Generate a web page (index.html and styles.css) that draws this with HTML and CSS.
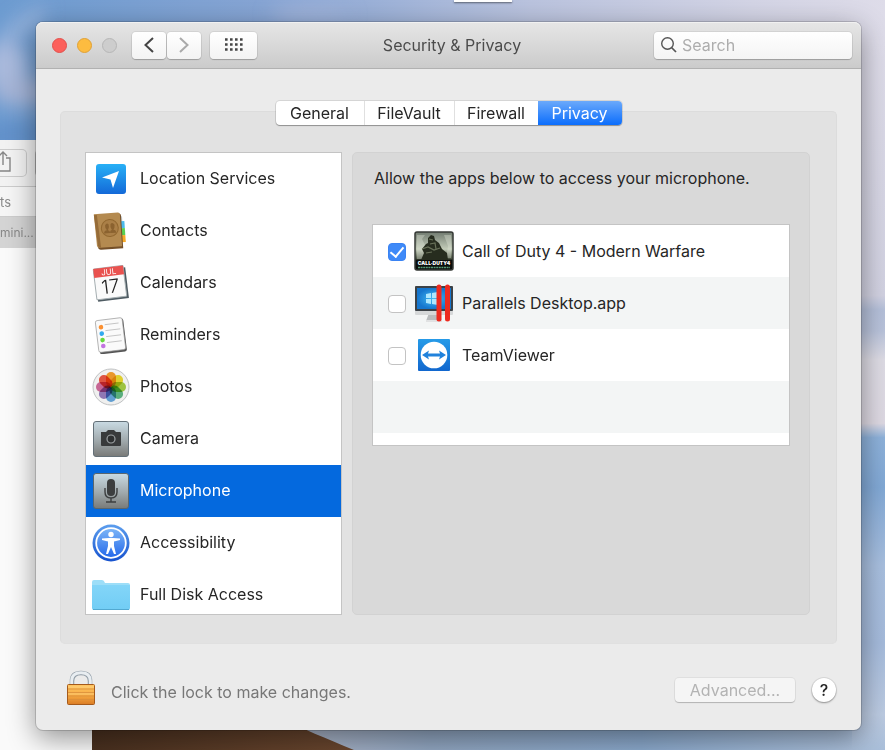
FILE: index.html
```
<!DOCTYPE html>
<html lang="en">
<head>
<meta charset="utf-8">
<title>Security &amp; Privacy</title>
<link rel="stylesheet" href="styles.css">
</head>
<body>
<svg class="wallpaper" viewBox="0 0 885 750" preserveAspectRatio="none" aria-hidden="true">
  <defs>
    <linearGradient id="sky" x1="0" x2="1"><stop offset="0" stop-color="#6c9bd0"/><stop offset=".3" stop-color="#87a5d4"/><stop offset=".6" stop-color="#bac3de"/><stop offset=".85" stop-color="#d3d4e5"/><stop offset="1" stop-color="#dedce9"/></linearGradient>
    <linearGradient id="east" x1="0" x2="0" y1="0" y2="1"><stop offset="0" stop-color="#dfddea"/><stop offset=".36" stop-color="#d2d2e2"/><stop offset=".38" stop-color="#b5c0da"/><stop offset=".41" stop-color="#b9c3db"/><stop offset=".45" stop-color="#dedce5"/><stop offset=".54" stop-color="#ded9e3"/><stop offset=".56" stop-color="#8eb2db"/><stop offset=".63" stop-color="#82a9d6"/><stop offset=".74" stop-color="#a8bfdf"/><stop offset=".85" stop-color="#a5bbdc"/><stop offset=".95" stop-color="#bccbe2"/><stop offset="1" stop-color="#aabfda"/></linearGradient>
    <linearGradient id="south" x1="0" x2="1"><stop offset="0" stop-color="#b4b9c9"/><stop offset=".3" stop-color="#91a6c1"/><stop offset=".65" stop-color="#8ba9cc"/><stop offset="1" stop-color="#aabfda"/></linearGradient>
    <linearGradient id="dune" x1="0" x2="1"><stop offset="0" stop-color="#49301f"/><stop offset="1" stop-color="#6b472f"/></linearGradient>
    <filter id="soft" x="-100%" y="-100%" width="300%" height="300%"><feGaussianBlur stdDeviation="9"/></filter>
  </defs>
  <rect width="885" height="750" fill="url(#sky)"/>
  <g filter="url(#soft)">
    <ellipse cx="22" cy="26" rx="30" ry="8" fill="#94b1da" transform="rotate(-35 22 26)"/>
    <ellipse cx="6" cy="66" rx="22" ry="24" fill="#a9b9dc"/>
    <ellipse cx="22" cy="92" rx="30" ry="14" fill="#a5b4d6"/>
    <ellipse cx="14" cy="136" rx="60" ry="12" fill="#618fc9"/>
    <ellipse cx="310" cy="14" rx="40" ry="6" fill="#a4b5da"/>
  </g>
  <rect x="850" y="40" width="35" height="710" fill="url(#east)"/>
  <rect x="250" y="715" width="602" height="35" fill="url(#south)"/>
  <path d="M91 715H275C305 730 325 738 354 750H91Z" fill="url(#dune)"/>
</svg>

<div class="finder" aria-hidden="true">
  <div class="finder-tools">
    <span class="finder-share"><svg width="20" height="24" viewBox="0 0 20 24"><path d="M5 8H1V21H15V8H11M8 15V2M4 6L8 2L12 6" fill="none" stroke="#858585" stroke-width="1.4"/></svg></span>
    <span class="finder-next"></span>
  </div>
  <div class="finder-path">ts</div>
  <div class="finder-tab">mini...</div>
</div>
<div class="tip" aria-hidden="true"></div>

<main class="window">
  <header class="titlebar">
    <div class="left">
      <div class="lights">
        <button class="light red" aria-label="Close"></button>
        <button class="light amber" aria-label="Minimize"></button>
        <button class="light" aria-label="Zoom" disabled></button>
      </div>
      <div class="history">
        <button class="tool" aria-label="Back"><svg width="12" height="18" viewBox="0 0 12 18"><path d="M10 2L2.500 9L10 16" fill="none" stroke="#444" stroke-width="2"/></svg></button>
        <button class="tool" aria-label="Forward"><svg width="12" height="18" viewBox="0 0 12 18"><path d="M2 2L9.500 9L2 16" fill="none" stroke="#aaa" stroke-width="2"/></svg></button>
      </div>
      <button class="tool grid-button" aria-label="Show All"><svg width="18" height="14" viewBox="0 0 18 14"><path d="M0 1.500H18M0 6.500H18M0 11.500H18" stroke="#444" stroke-width="2.600" stroke-dasharray="2.600 2.400"/></svg></button>
    </div>
    <h1>Security &amp; Privacy</h1>
    <label class="search">
      <svg width="18" height="18" viewBox="0 0 18 18"><circle cx="7.500" cy="7.500" r="5.800" fill="none" stroke="#555" stroke-width="1.400"/><path d="M11.500 11.500L16 16" stroke="#555" stroke-width="1.700"/></svg>
      <input type="text" placeholder="Search" aria-label="Search">
    </label>
  </header>

  <div class="content">
    <nav class="tabs">
      <button>General</button><button>FileVault</button><button>Firewall</button><button class="active">Privacy</button>
    </nav>
    <section class="panel">
      <ul class="services">
        <li><button><svg class="icon" viewBox="0 0 38 38"><defs><linearGradient id="loc" x1="0" x2="0" y1="0" y2="1"><stop offset="0" stop-color="#28b0f6"/><stop offset="1" stop-color="#1369d8"/></linearGradient></defs><rect x="4" y="4" width="30" height="30" rx="3" fill="url(#loc)"/><path d="M27 11L21 28L18.500 19.500L10 17.500Z" fill="#fff"/></svg>Location Services</button></li>
        <li><button><svg class="icon" viewBox="0 0 38 38"><g transform="rotate(-4 19 19)"><path d="M28 5H31V11H28Z" fill="#c8cdd0"/><path d="M29 10H33V17H29Z" fill="#4ab9eb"/><path d="M29 17H33V24H29Z" fill="#59cf51"/><path d="M28 24H33V31H28Z" fill="#f5a928"/><path d="M5 2H28Q30 2 30 4V37H8Q5 37 5 34Z" fill="#755029"/><path d="M3 1H27Q29 1 29 3V35H7Q4 35 4 33Z" fill="#b48a50"/><path d="M3 2H6L8 35Q5 35 5 32Z" fill="#966c38"/><circle cx="18" cy="16" r="8.500" fill="#aa7f47" stroke="#91672f"/><path d="M12 21Q12 18 15 18Q13 16 13.500 13Q15 10 17 12Q18 15 16 18Q18 18 18 21ZM18 21Q18 18 20 18Q18 15 19 12Q21 10 23 13Q23 16 21.500 18Q24 18 24 21Z" fill="#8b622f"/></g></svg>Contacts</button></li>
        <li><button><svg class="icon" viewBox="0 0 38 38"><g transform="rotate(-7 19 19)"><path d="M3 5H35V36H4Z" fill="#4e5b62"/><rect x="3" y="3" width="30" height="31" rx="1" fill="#fafafa" stroke="#a6afb2"/><path d="M3 3H33V12H3Z" fill="#e9524f"/><text x="18" y="10.500" text-anchor="middle" font-size="8" fill="#fff">JUL</text><text x="18" y="29" text-anchor="middle" font-size="19" font-weight="300" fill="#222">17</text></g></svg>Calendars</button></li>
        <li><button><svg class="icon" viewBox="0 0 38 38"><g transform="rotate(-7 19 19)"><rect x="6" y="4" width="27" height="33" rx="2" fill="#555"/><rect x="5" y="3" width="27" height="32" rx="2" fill="#fafafa" stroke="#999" stroke-width=".7"/><path d="M14 8H28M14 14H29M14 20H29M14 26H29" stroke="#bbb" stroke-width=".8"/><circle cx="10" cy="10" r="2.300" fill="#fb9031"/><circle cx="10" cy="16.500" r="2.300" fill="#31a9ee"/><circle cx="10" cy="23" r="2.300" fill="#67d93c"/><circle cx="10" cy="29" r="2.300" fill="#c373e1"/></g></svg>Reminders</button></li>
        <li><button><svg class="icon" viewBox="0 0 38 38"><circle cx="19" cy="19" r="18" fill="#f0f0ef" stroke="#c0c2c3"/><g class="petals"><rect x="14" y="4" width="10" height="15" rx="5" fill="#f8a12c"/><rect x="14" y="4" width="10" height="15" rx="5" fill="#eddb31" transform="rotate(45 19 19)"/><rect x="14" y="4" width="10" height="15" rx="5" fill="#a8cf46" transform="rotate(90 19 19)"/><rect x="14" y="4" width="10" height="15" rx="5" fill="#60b985" transform="rotate(135 19 19)"/><rect x="14" y="4" width="10" height="15" rx="5" fill="#67a8df" transform="rotate(180 19 19)"/><rect x="14" y="4" width="10" height="15" rx="5" fill="#987fc0" transform="rotate(225 19 19)"/><rect x="14" y="4" width="10" height="15" rx="5" fill="#d36c9e" transform="rotate(270 19 19)"/><rect x="14" y="4" width="10" height="15" rx="5" fill="#ed5946" transform="rotate(315 19 19)"/></g></svg>Photos</button></li>
        <li><button><svg class="icon" viewBox="0 0 38 38"><defs><linearGradient id="metal" x1="0" x2="0" y1="0" y2="1"><stop offset="0" stop-color="#c9dae3"/><stop offset=".55" stop-color="#a0a9ac"/><stop offset="1" stop-color="#797a78"/></linearGradient></defs><rect x="1.500" y="1.500" width="35" height="35" rx="2.500" fill="url(#metal)" stroke="#647078"/><path d="M9 12H14L16 10H22L24 12H28Q29 12 29 13V25Q29 26 28 26H10Q9 26 9 25V13Q9 12 9 12Z" fill="#383a3b"/><circle cx="19" cy="19" r="4" fill="#2e3031" stroke="#9da2a4" stroke-width="1.200"/></svg>Camera</button></li>
        <li><button class="selected" aria-current="true"><svg class="icon" viewBox="0 0 38 38"><rect x="1.500" y="1.500" width="35" height="35" rx="2.500" fill="url(#metal)" stroke="#59666e"/><rect x="15" y="7" width="8" height="17" rx="4" fill="#3c3e3f"/><path d="M13 16V20Q13 26 19 26T25 20V16M19 26V30M14 30H24" fill="none" stroke="#3c3e3f" stroke-width="1.400"/></svg>Microphone</button></li>
        <li><button><svg class="icon" viewBox="0 0 38 38"><defs><linearGradient id="access" x1="0" x2="0" y1="0" y2="1"><stop offset="0" stop-color="#5c9eee"/><stop offset="1" stop-color="#1652ce"/></linearGradient><linearGradient id="access-in" x1="0" x2="0" y1="0" y2="1"><stop offset="0" stop-color="#7db6f7"/><stop offset="1" stop-color="#2468ea"/></linearGradient></defs><circle cx="19" cy="19" r="18.500" fill="url(#access)"/><circle cx="19" cy="19" r="14.800" fill="url(#access-in)" stroke="#fff" stroke-width="1.800"/><circle cx="19" cy="10.500" r="2.700" fill="#fff"/><path d="M10 14.500L17 14H21L28 14.500V16L22 17.500V22L24 30H22L19 23L16 30H14L16 22V17.500L10 16Z" fill="#fff"/></svg>Accessibility</button></li>
        <li><button><svg class="icon" viewBox="0 0 38 38"><defs><linearGradient id="folder" x1="0" x2="0" y1="0" y2="1"><stop offset="0" stop-color="#83d5f8"/><stop offset="1" stop-color="#71cdf5"/></linearGradient></defs><path d="M0 6Q0 4 2 4H10Q12 4 13 7H36Q38 7 38 9V16H0Z" fill="#9ddef8"/><path d="M0 9H38V32Q38 34 36 34H2Q0 34 0 32Z" fill="url(#folder)"/><path d="M1 33.500H37" stroke="#52a9d1"/></svg>Full Disk Access</button></li>
      </ul>
      <div class="detail">
        <p>Allow the apps below to access your microphone.</p>
        <div class="apps">
          <label><input type="checkbox" checked><svg class="app-icon" viewBox="0 0 40 40"><defs><linearGradient id="cod" x1="0" x2="0" y1="0" y2="1"><stop offset="0" stop-color="#717b70"/><stop offset=".45" stop-color="#c2cbb8"/><stop offset=".7" stop-color="#48513f"/><stop offset=".75" stop-color="#0b0e0b"/></linearGradient></defs><rect x="1" y="1" width="38" height="38" rx="2" fill="url(#cod)" stroke="#343834" stroke-width="1.500"/><path d="M3 4H11L8 8L12 16L9 28H3ZM30 4H37V27H32L34 15Z" fill="#e5ecdc" opacity=".35"/><path d="M14 7L17 4L20 5L21 9L25 12L28 18L33 22L34 29H7L10 22L8 18L12 13L14 12Z" fill="#272d1f"/><path d="M8 18L14 16L20 19L26 17M15 8L19 9M16 13L21 12L22 18M12 22L18 21" stroke="#69725a" stroke-width="1.200" fill="none"/><text x="20" y="34" text-anchor="middle" font-size="5" font-weight="900" fill="#fff">CALL·DUTY4</text><path d="M4 36.500H36" stroke="#589b78" stroke-width="1.600" stroke-dasharray="2 .6"/></svg>Call of Duty 4 - Modern Warfare</label>
          <label><input type="checkbox"><svg class="app-icon" viewBox="0 0 40 40"><defs><radialGradient id="screen"><stop offset="0" stop-color="#45bdf5"/><stop offset="1" stop-color="#1576ce"/></radialGradient></defs><path d="M15 30H25L28 38H12Z" fill="#b9bcbe"/><path d="M12 37H28V39H12Z" fill="#e1e2e3"/><rect x="1" y="3" width="38" height="29" rx="1" fill="#d6d8d9"/><rect x="1" y="3" width="38" height="25" rx="1" fill="#3c4247"/><rect x="3" y="5" width="34" height="21" fill="url(#screen)"/><path d="M12 11L17 10V15H12ZM18 10L24 9V15H18ZM12 16H17V21L12 20ZM18 16H24V22L18 21Z" fill="#aee8ff"/><path d="M25 4V36M33.500 4V36" stroke="#ed2b20" stroke-width="5" stroke-linecap="round"/></svg>Parallels Desktop.app</label>
          <label><input type="checkbox"><svg class="app-icon" viewBox="0 0 40 40"><defs><linearGradient id="tv" x1="0" x2="0" y1="0" y2="1"><stop offset="0" stop-color="#269be8"/><stop offset="1" stop-color="#1167ce"/></linearGradient></defs><rect x="4" y="4" width="32" height="32" rx="1" fill="url(#tv)"/><circle cx="20" cy="20" r="13.300" fill="#fff"/><path d="M8 20L15 15.500L14 18.500H26L25 15.500L32 20L25 24.500L26 21.500H14L15 24.500Z" fill="#2082dc"/></svg>TeamViewer</label>
        </div>
      </div>
    </section>
    <footer class="footer">
      <button class="lock" aria-label="Unlock"><svg width="30" height="36" viewBox="0 0 30 36"><defs><linearGradient id="gold" x1="0" x2="0" y1="0" y2="1"><stop offset="0" stop-color="#ffc663"/><stop offset=".5" stop-color="#f7ad45"/><stop offset="1" stop-color="#db7c25"/></linearGradient></defs><path d="M6 16V11Q6 3 15 3T24 11V16" fill="none" stroke="#8e9aa4" stroke-width="4.500"/><path d="M5.700 16V11Q5.700 2.700 15 2.700T24.300 11V16" fill="none" stroke="#e8edf1" stroke-width="3"/><rect x="1.500" y="14.500" width="27" height="20" rx="1" fill="url(#gold)" stroke="#a55a1b"/><path d="M2 19H28M2 22.500H28M2 26H28M2 29.500H28" stroke="#d98f3c" stroke-width=".8"/><path d="M2 17H28M2 24H28" stroke="#ffdb8c" stroke-width=".7"/></svg></button>
      <span class="hint">Click the lock to make changes.</span>
      <button class="advanced" disabled>Advanced...</button>
      <button class="help" aria-label="Help">?</button>
    </footer>
  </div>
</main>
</body>
</html>
```
FILE: styles.css
```
* { box-sizing: border-box; }
html { height: 100%; }
body {
  margin: 0;
  min-height: 100%;
  padding: 22px 24px 20px 36px;
  position: relative;
  overflow: hidden;
  font-family: Inter, "Liberation Sans", sans-serif;
  font-size: 16px;
  line-height: 20px;
  color: #262626;
}
button, input { font: inherit; color: inherit; }
button { border: 0; padding: 0; margin: 0; background: none; }
svg { display: block; flex: none; }

.wallpaper { position: absolute; inset: 0; width: 100%; height: 100%; }
.tip {
  position: absolute; top: 0; left: 454px; width: 58px; height: 2px;
  background: #fff; box-shadow: 0 1px 2px rgba(0, 0, 0, .5);
}
.finder {
  position: absolute; top: 140px; bottom: 0; left: 0; width: 92px;
  background: #fafafa;
  color: #888;
  font-size: 13px;
}
.finder-tools {
  display: flex; gap: 8px; height: 47px; padding-top: 9px;
  background: #f2f2f2; border-bottom: 1px solid #ccc;
}
.finder-share, .finder-next {
  width: 27px; height: 28px; border: 1px solid #ccc; border-left: 0;
  border-radius: 0 5px 5px 0;
}
.finder-next { border-left: 1px solid #bbb; border-radius: 5px; }
.finder-share svg { margin-left: -5px; }
.finder-path { height: 30px; line-height: 30px; border-bottom: 1px solid #ccc; background: #f5f5f5; }
.finder-tab { height: 31px; line-height: 31px; background: #d4d4d4; font-size: 12px; }

.window {
  position: relative;
  min-height: 708px;
  border-radius: 7px;
  background: #ebebeb;
  box-shadow: 0 0 0 1px rgba(0, 0, 0, .15), 0 8px 28px rgba(0, 0, 0, .42);
}
.titlebar {
  display: grid;
  grid-template-columns: 1fr auto 1fr;
  align-items: center;
  height: 47px;
  padding: 0 9px 0 16px;
  border-radius: 7px 7px 0 0;
  border-bottom: 1px solid #b1b1b1;
  background: linear-gradient(#e6e6e6, #cbcbcb);
  box-shadow: inset 0 1px #f1f1f1;
}
.titlebar h1 { margin: 0; font-size: 16px; font-weight: 400; color: #4b4b4b; }
.left, .lights, .history { display: flex; align-items: center; }
.lights { gap: 10px; margin-right: 15px; }
.light { width: 15px; height: 15px; border-radius: 50%; border: 1px solid #b6b6b6; background: #cdcdcd; }
.light.red { background: #fc605b; border-color: #e2504c; }
.light.amber { background: #fdbc40; border-color: #e0a136; }
.history { gap: 1px; margin-right: 9px; }
.tool {
  display: flex; align-items: center; justify-content: center;
  width: 34px; height: 27px; border-radius: 4px;
  background: linear-gradient(#fff, #f3f3f3);
  box-shadow: 0 0 0 1px rgba(0, 0, 0, .06), 0 1px 1px rgba(0, 0, 0, .2);
}
.grid-button { width: 47px; }
.search {
  justify-self: end;
  display: flex; align-items: center; gap: 4px;
  width: 198px; height: 27px; padding: 0 6px;
  border-radius: 4px;
  background: linear-gradient(#fff, #f4f4f4);
  box-shadow: 0 0 0 1px rgba(0, 0, 0, .06), 0 1px 1px rgba(0, 0, 0, .2);
}
.search input { flex: 1; min-width: 0; border: 0; padding: 0; background: none; outline: 0; }
.search input::placeholder { color: #adadad; opacity: 1; }

.content { padding: 32px 24px 0; }
.tabs {
  position: relative; z-index: 1;
  display: grid; grid-template-columns: 88px 90px 84px 84px;
  width: max-content; margin: 0 auto -14px;
  border-radius: 4px; background: #fff;
  box-shadow: 0 0 0 1px rgba(0, 0, 0, .09), 0 1px 1px rgba(0, 0, 0, .3);
}
.tabs button { height: 24px; border-left: 1px solid #e0e0e0; }
.tabs button:first-child { border-left: 0; }
.tabs .active {
  color: #fff; border-left: 0; border-radius: 0 4px 4px 0;
  background: linear-gradient(#6ba9fb, #0b6dfc);
}
.panel {
  display: flex; gap: 10px;
  padding: 40px 26px 28px 24px;
  border: 1px solid #dcdcdc; border-bottom-color: #e0e0e0;
  border-radius: 5px;
  background: #e2e2e2;
}
.services {
  flex: none; width: 257px; height: 463px; margin: 0; padding: 0;
  list-style: none; overflow: hidden;
  background: #fff; border: 1px solid #c4c4c4;
}
.services button {
  display: flex; align-items: center; gap: 10px;
  width: 100%; height: 52px; padding: 0 6px 3px;
  text-align: left;
}
.services .selected { background: #0469de; color: #fff; }
.icon { width: 38px; height: 38px; margin-top: 3px; }
.petals rect { mix-blend-mode: multiply; }
.detail {
  flex: 1; padding: 15px 19px 20px;
  border: 1px solid #d2d2d2; border-radius: 5px;
  background: #d9d9d9;
}
.detail p { margin: 0 0 36px 2px; }
.apps {
  min-height: 222px; border: 1px solid #c4c4c4;
  background: repeating-linear-gradient(#fff 0 52px, #f3f5f5 52px 104px);
}
.apps label { display: flex; align-items: center; gap: 8px; height: 52px; padding-left: 15px; }
.apps input {
  appearance: none; width: 18px; height: 18px; margin: 2px 0 0;
  border: 1px solid #c3c3c3; border-radius: 4px; background: #fff;
}
.apps input:checked {
  border-color: #3a83f3;
  background: #3f8af8;
  display: grid; place-items: center;
}
.apps input:checked::after {
  content: ""; width: 6px; height: 11px; margin-bottom: 3px;
  border: solid #fff; border-width: 0 2px 2px 0; transform: rotate(40deg);
}
.app-icon { width: 40px; height: 40px; }

.footer { display: flex; align-items: center; padding: 26px 1px 24px 6px; }
.hint { margin: 8px auto 0 15px; color: #777; }
.advanced {
  width: 120px; height: 24px; margin: 4px 17px 0 0; border-radius: 4px;
  color: #b3b3b3; background: #f5f5f5;
  box-shadow: 0 0 0 1px rgba(0, 0, 0, .05), 0 1px 1px rgba(0, 0, 0, .2);
}
.help {
  width: 24px; height: 24px; border-radius: 50%; margin-top: 4px;
  background: #fff; font-weight: 500;
  box-shadow: 0 0 0 1px rgba(0, 0, 0, .08), 0 1px 2px rgba(0, 0, 0, .35);
}
```
